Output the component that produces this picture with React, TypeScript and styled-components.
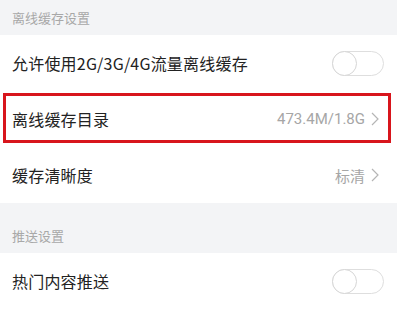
import * as React from 'react';
import styled, { createGlobalStyle } from 'styled-components';

const GlobalStyle = createGlobalStyle`
  html, body {
    margin: 0;
    padding: 0;
    background: #fff;
  }
  body {
    font-family: "Noto Sans CJK SC", "Noto Sans", sans-serif;
    -webkit-font-smoothing: antialiased;
  }
`;

type RowProps = {
  label: string;
  value?: string;
  toggle?: boolean;
  highlighted?: boolean;
};

const SettingRow: React.FC<RowProps> = ({ label, value, toggle, highlighted }) => (
  <Row>
    <Label>{label}</Label>
    {toggle && <Switch><Knob /></Switch>}
    {value && (
      <ValueWrap>
        <Value>{value}</Value>
        <Chevron viewBox="0 0 8 14">
          <path d="M1 1 L7 7 L1 13" fill="none" stroke="#b5b5b5" strokeWidth="1.2" />
        </Chevron>
      </ValueWrap>
    )}
    {highlighted && <Highlight />}
  </Row>
);

const App: React.FC = () => (
  <>
    <GlobalStyle />
    <Page>
      <SectionHeader $height={35}>离线缓存设置</SectionHeader>
      <SettingRow label="允许使用2G/3G/4G流量离线缓存" toggle />
      <SettingRow label="离线缓存目录" value="473.4M/1.8G" highlighted />
      <SettingRow label="缓存清晰度" value="标清" />
      <SectionHeader $height={50}>推送设置</SectionHeader>
      <SettingRow label="热门内容推送" toggle />
    </Page>
  </>
);

export default App;

const Page = styled.div`
  width: 397px;
  display: flex;
  flex-direction: column;
  background: #fff;
`;

const SectionHeader = styled.div<{ $height: number }>`
  height: ${(p) => p.$height}px;
  box-sizing: border-box;
  display: flex;
  align-items: flex-end;
  padding: 0 12px 9px;
  background: #f3f4f6;
  color: #a8a8a8;
  font-size: 13px;
  line-height: 16px;
`;

const Row = styled.div`
  position: relative;
  height: 56px;
  display: flex;
  align-items: center;
  justify-content: space-between;
  padding: 0 12px;
  background: #fff;
`;

const Label = styled.span`
  font-size: 16px;
  color: #222;
  letter-spacing: 0.2px;
`;

const ValueWrap = styled.div`
  display: flex;
  align-items: center;
  gap: 6px;
  margin-right: 6px;
`;

const Value = styled.span`
  font-family: "Roboto", "Noto Sans CJK SC", sans-serif;
  font-size: 15px;
  color: #a6a6a6;
`;

const Chevron = styled.svg`
  width: 8px;
  height: 14px;
`;

const Switch = styled.div`
  position: relative;
  width: 52px;
  height: 25px;
  box-sizing: border-box;
  border: 1px solid #dedede;
  border-radius: 13px;
  background: #fff;
  margin-right: 1px;
`;

const Knob = styled.div`
  position: absolute;
  left: -1px;
  top: -1px;
  width: 25px;
  height: 25px;
  box-sizing: border-box;
  border: 1px solid #d6d6d6;
  border-radius: 50%;
  background: #fff;
`;

const Highlight = styled.div`
  position: absolute;
  top: 2px;
  left: 3px;
  right: 6px;
  bottom: 4px;
  border: 3px solid #d8151c;
  pointer-events: none;
`;
